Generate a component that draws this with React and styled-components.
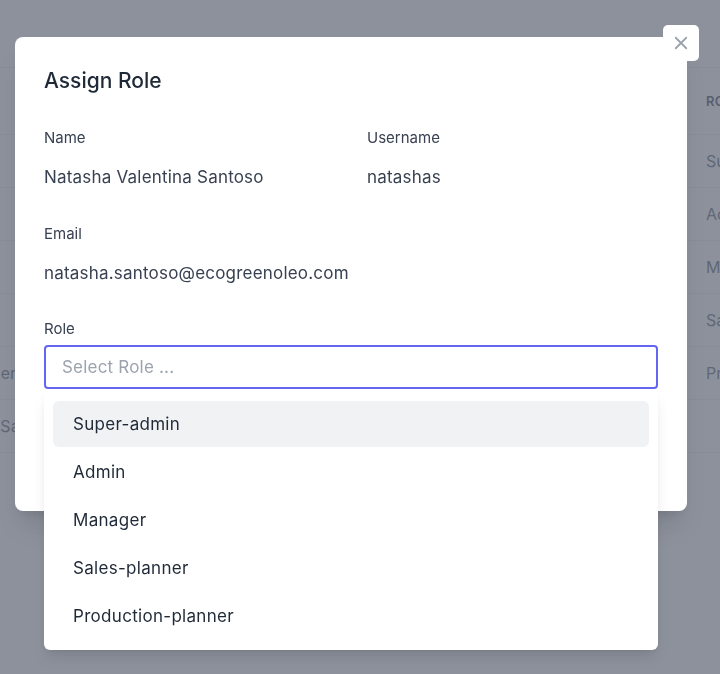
import React, { useState } from 'react'
import styled, { createGlobalStyle } from 'styled-components'

const GlobalStyle = createGlobalStyle`
  html, body { margin: 0; padding: 0; }
  body {
    font-family: Inter, "Noto Sans", "Liberation Sans", sans-serif;
    color: #374151;
    background: #fff;
    overflow: hidden;
  }
  * { box-sizing: border-box; }
`

const users = [
  { name: 'Andi', role: 'Super-admin' },
  { name: 'Rina', role: 'Admin' },
  { name: 'Joko', role: 'Manager' },
  { name: 'Sari', role: 'Sales-planner' },
  { name: 'Manager PPIC', role: 'Production-planner' },
  { name: 'Dimas Santoso', role: '' },
]

const roles = ['Super-admin', 'Admin', 'Manager', 'Sales-planner', 'Production-planner']

const App = () => {
  const [active] = useState(0)
  return (
    <>
      <GlobalStyle />
      <Page>
        <Table>
          <HeadRow>
            <Cell>NAME</Cell>
            <Cell>USERNAME</Cell>
            <Cell>ROLE</Cell>
          </HeadRow>
          {users.map((u, i) => (
            <Row key={i}>
              <Cell>{u.name}</Cell>
              <Cell>user{i}</Cell>
              <Cell>{u.role}</Cell>
            </Row>
          ))}
        </Table>
      </Page>

      <Overlay>
        <Modal>
          <CloseButton aria-label="close">
            <svg width="18" height="18" viewBox="0 0 24 24" fill="none" stroke="currentColor" strokeWidth="2.4" strokeLinecap="round">
              <path d="M5 5l14 14M19 5L5 19" />
            </svg>
          </CloseButton>
          <Title>Assign Role</Title>
          <Fields>
            <Field>
              <Label>Name</Label>
              <Value>Natasha Valentina Santoso</Value>
            </Field>
            <Field>
              <Label>Username</Label>
              <Value>natashas</Value>
            </Field>
            <Field>
              <Label>Email</Label>
              <Value>natasha.santoso@ecogreenoleo.com</Value>
            </Field>
          </Fields>
          <SelectWrap>
            <Label>Role</Label>
            <SelectBox>
              <Placeholder>Select Role ...</Placeholder>
            </SelectBox>
            <Menu>
              {roles.map((r, i) => (
                <Option key={r} $active={i === active}>{r}</Option>
              ))}
            </Menu>
          </SelectWrap>
          <Footer>
            <SubmitButton>Assign</SubmitButton>
          </Footer>
        </Modal>
      </Overlay>
    </>
  )
}

export default App

const Page = styled.div`
  width: 720px;
  height: 674px;
  padding-top: 67px;
`

const Table = styled.div`
  margin-left: -51px;
  width: 900px;
  border-top: 1px solid #e5e7eb;
`

const HeadRow = styled.div`
  display: grid;
  grid-template-columns: 240px 517px 1fr;
  height: 67px;
  align-items: center;
  border-bottom: 1px solid #e5e7eb;
  font-size: 13px;
  font-weight: 600;
  letter-spacing: 0.3px;
  color: #111827;
`

const Row = styled(HeadRow)`
  height: 53px;
  font-size: 16px;
  font-weight: 400;
  letter-spacing: 0;
  color: #374151;
`

const Cell = styled.div`
  white-space: nowrap;
  overflow: hidden;
`

const Overlay = styled.div`
  position: fixed;
  inset: 0;
  background: rgba(107, 114, 128, 0.78);
  padding: 37px 0 0 15px;
`

const Modal = styled.div`
  position: relative;
  width: 672px;
  height: 474px;
  background: #fff;
  border-radius: 8px;
  padding: 29px 29px 29px;
  display: flex;
  flex-direction: column;
  box-shadow: 0 20px 25px -5px rgba(0, 0, 0, 0.1), 0 8px 10px -6px rgba(0, 0, 0, 0.1);
`

const CloseButton = styled.button`
  position: absolute;
  top: -12px;
  right: -12px;
  width: 36px;
  height: 36px;
  border: none;
  border-radius: 5px;
  background: #fff;
  color: #9ca3af;
  display: flex;
  align-items: center;
  justify-content: center;
  padding: 0;
  cursor: pointer;
`

const Title = styled.h2`
  margin: 0;
  font-size: 21px;
  line-height: 30px;
  font-weight: 500;
  color: #1f2937;
`

const Fields = styled.div`
  display: grid;
  grid-template-columns: minmax(0, 1fr) minmax(0, 1fr);
  column-gap: 32px;
  row-gap: 35px;
  margin-top: 32px;
`

const Field = styled.div`
  display: flex;
  flex-direction: column;
  gap: 17px;
  white-space: nowrap;
`

const Label = styled.div`
  font-size: 15px;
  line-height: 20px;
  color: #374151;
`

const Value = styled.div`
  font-size: 17px;
  line-height: 24px;
  letter-spacing: 0.2px;
  color: #374151;
`

const SelectWrap = styled.div`
  position: relative;
  margin-top: 34px;
  display: flex;
  flex-direction: column;
  gap: 6px;
`

const SelectBox = styled.div`
  height: 44px;
  border: 2px solid #6366f1;
  border-radius: 4px;
  display: flex;
  align-items: center;
  padding: 0 16px;
`

const Placeholder = styled.span`
  font-size: 17px;
  letter-spacing: 0.2px;
  color: #9ca3af;
`

const Menu = styled.div`
  position: absolute;
  top: 70px;
  left: 0;
  right: 0;
  z-index: 5;
  background: #fff;
  border-radius: 0 0 6px 6px;
  padding: 12px 9px 11px;
  display: flex;
  flex-direction: column;
  gap: 2px;
  box-shadow: 0 10px 15px -3px rgba(0, 0, 0, 0.1), 0 4px 6px -4px rgba(0, 0, 0, 0.1);
`

const Option = styled.div`
  height: 46px;
  display: flex;
  align-items: center;
  padding: 0 20px;
  border-radius: 6px;
  font-size: 17px;
  letter-spacing: 0.3px;
  color: #1f2937;
  background: ${p => (p.$active ? '#f1f2f4' : 'transparent')};
`

const Footer = styled.div`
  margin-top: auto;
  display: flex;
  justify-content: flex-end;
`

const SubmitButton = styled.button`
  height: 42px;
  padding: 0 20px;
  border: none;
  border-radius: 6px;
  background: #6366f1;
  color: #fff;
  font-family: inherit;
  font-size: 15px;
`
